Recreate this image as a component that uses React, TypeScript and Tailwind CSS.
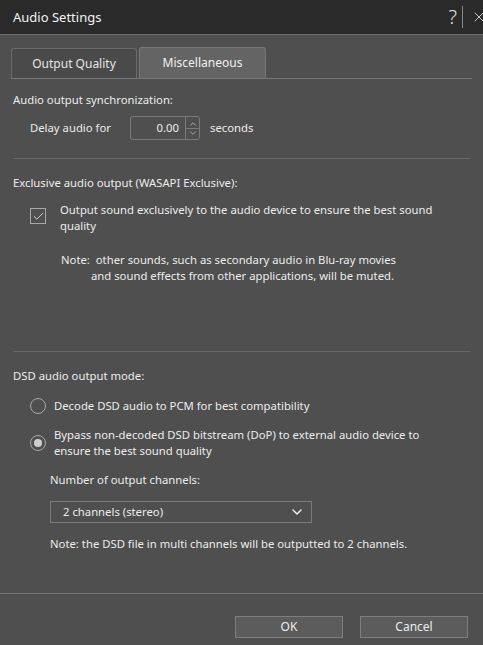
import { Check, ChevronDown, ChevronUp, X } from "lucide-react"

function Rule() {
  return <div className="mx-[13px] h-px bg-[#686868]" />
}

export default function App() {
  return (
    <div className="w-[483px] h-[645px] bg-[#4f4f4f] text-[#ececec] text-[11.3px] leading-[18px] flex flex-col overflow-hidden [font-family:'Noto_Sans','Open_Sans',sans-serif]">
      {/* Title bar */}
      <div className="h-[35px] shrink-0 bg-[#2a2a2a] border-b border-[#6e6e6e] flex items-center pl-[13px]">
        <span className="text-[13px] text-[#f2f2f2]">Audio Settings</span>
        <div className="ml-auto flex items-center h-full">
          <span className="text-[20px] font-light text-[#e0e0e0] leading-none mr-[5px]">?</span>
          <div className="w-px h-[22px] bg-[#8a8a8a] mr-[8px]" />
          <X size={16} strokeWidth={1.3} className="text-[#e0e0e0] -mr-[4px]" />
        </div>
      </div>

      {/* Tabs */}
      <div className="mx-[11px] mt-[13px] flex items-end gap-[2px] border-b border-[#777] h-[31px]">
        <div className="w-[126px] h-[30px] rounded-t-[3px] border border-b-0 border-[#6a6a6a] bg-[#4a4a4a] flex items-center justify-center text-[12px] text-[#e6e6e6]">
          Output Quality
        </div>
        <div className="w-[127px] h-[31px] rounded-t-[3px] border border-b-0 border-[#777] bg-[#646464] flex items-center justify-center text-[12px] text-[#f0f0f0]">
          Miscellaneous
        </div>
      </div>

      {/* Sync */}
      <div className="px-[13px] pt-[12px]">
        <div>Audio output synchronization:</div>
        <div className="flex items-center mt-[7px] pl-[17px]">
          <span className="w-[100px] shrink-0">Delay audio for</span>
          <div className="w-[70px] h-[24px] border border-[#7a7a7a] rounded-[3px] flex items-center">
            <span className="flex-1 text-right pr-[6px]">0.00</span>
            <div className="w-[14px] h-full border-l border-[#7a7a7a] flex flex-col items-center justify-center">
              <ChevronUp size={10} strokeWidth={1.6} className="text-[#d0d0d0] -mb-[1px]" />
              <div className="w-full h-px bg-[#7a7a7a]" />
              <ChevronDown size={10} strokeWidth={1.6} className="text-[#d0d0d0] -mt-[1px]" />
            </div>
          </div>
          <span className="ml-[10px]">seconds</span>
        </div>
      </div>

      <div className="mt-[18px]">
        <Rule />
      </div>

      {/* Exclusive */}
      <div className="px-[13px] pt-[15px]">
        <div>Exclusive audio output (WASAPI Exclusive):</div>
        <div className="flex items-start mt-[10px] pl-[17px]">
          <div className="mt-[6px] w-[16px] h-[16px] border border-[#a8a8a8] flex items-center justify-center shrink-0">
            <Check size={13} strokeWidth={1.8} className="text-[#d8d8d8]" />
          </div>
          <div className="ml-[14px] leading-[16px] w-[390px]">
            Output sound exclusively to the audio device to ensure the best sound quality
          </div>
        </div>
        <div className="mt-[18px] pl-[48px] leading-[16px]">
          <div>Note:&nbsp; other sounds, such as secondary audio in Blu-ray movies</div>
          <div className="pl-[30px]">and sound effects from other applications, will be muted.</div>
        </div>
      </div>

      <div className="mt-[67px]">
        <Rule />
      </div>

      {/* DSD */}
      <div className="px-[13px] pt-[15px]">
        <div>DSD audio output mode:</div>
        <div className="flex items-center mt-[12px] pl-[17px]">
          <div className="w-[16px] h-[16px] rounded-full border border-[#a8a8a8] shrink-0" />
          <span className="ml-[8px]">Decode DSD audio to PCM for best compatibility</span>
        </div>
        <div className="flex items-start mt-[12px] pl-[17px]">
          <div className="mt-[8px] w-[16px] h-[16px] rounded-full border border-[#a8a8a8] flex items-center justify-center shrink-0">
            <div className="w-[8px] h-[8px] rounded-full bg-[#cfcfcf]" />
          </div>
          <div className="ml-[8px] leading-[16px] w-[372px]">
            Bypass non-decoded DSD bitstream (DoP) to external audio device to ensure the best sound quality
          </div>
        </div>
        <div className="pl-[37px] mt-[12px]">
          <div>Number of output channels:</div>
          <div className="mt-[12px] w-[262px] h-[22px] border border-[#7a7a7a] flex items-center pl-[12px] pr-[6px]">
            <span>2 channels (stereo)</span>
            <ChevronDown size={16} strokeWidth={2.2} className="ml-auto text-[#f0f0f0]" />
          </div>
          <div className="mt-[12px]">Note: the DSD file in multi channels will be outputted to 2 channels.</div>
        </div>
      </div>

      {/* Footer */}
      <div className="mt-auto border-t border-[#777] h-[52px] shrink-0 flex items-start justify-end gap-[17px] pr-[15px] pt-[22px]">
        <button className="w-[108px] h-[22px] bg-[#5c5c5c] border border-[#7e7e7e] text-[#ececec] text-[12px] [font-family:'Noto_Sans',sans-serif]">OK</button>
        <button className="w-[108px] h-[22px] bg-[#5c5c5c] border border-[#7e7e7e] text-[#ececec] text-[12px] [font-family:'Noto_Sans',sans-serif]">Cancel</button>
      </div>
    </div>
  )
}
